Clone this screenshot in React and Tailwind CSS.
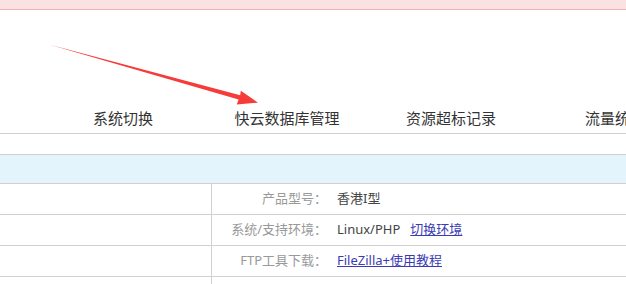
import React from 'react';

const font = { fontFamily: '"Noto Sans", "Noto Sans CJK SC", sans-serif' };

const tabs = ['系统切换', '快云数据库管理', '资源超标记录', '流量统计'];

function InfoRow({ label, children }) {
    return (
        <div className="flex h-[31px] border-b border-[#d0d0d0]">
            <div className="w-[212px] border-r border-[#d0d0d0]"></div>
            <div className="w-[115px] flex items-center justify-end text-[13px] text-[#999] whitespace-nowrap">{label}</div>
            <div className="flex-1 flex items-center pl-[10px] text-[13px] text-[#444] whitespace-nowrap">{children}</div>
        </div>
    );
}

export default function App() {
    return (
        <div className="relative w-[626px] h-[284px] overflow-hidden bg-white" style={font}>
            {/* top alert strip */}
            <div className="h-[10px] bg-[#fbe2e2] border-b border-[#f1b3b8]"></div>

            {/* tabs */}
            <div className="flex pl-[41px] pt-[98px] h-[124px] border-b border-[#cfcfcf] whitespace-nowrap">
                {tabs.map((t) => (
                    <div key={t} className="w-[164px] shrink-0 text-center text-[15px] leading-[20px] text-[#333]">{t}</div>
                ))}
            </div>

            <div className="h-[20px]"></div>
            <div className="h-[30px] bg-[#e3f4fc] border-y border-[#d0d0d0]"></div>

            <InfoRow label="产品型号：">香港I型</InfoRow>
            <InfoRow label="系统/支持环境：">
                <span>Linux/PHP</span>
                <a href="#" className="ml-[10px] text-[#3b3bb5] underline">切换环境</a>
            </InfoRow>
            <InfoRow label="FTP工具下载：">
                <a href="#" className="text-[#3b3bb5] underline">FileZilla+使用教程</a>
            </InfoRow>
            <div className="flex h-[12px]">
                <div className="w-[212px] border-r border-[#d0d0d0]"></div>
            </div>

            {/* red arrow annotation */}
            <svg className="absolute left-0 top-0 pointer-events-none" width="626" height="284" viewBox="0 0 626 284">
                <polygon
                    points="49,44.5 240.2,95.2 240.8,90.7 258,102.7 236.8,104.4 238.6,99.6"
                    fill="#f73a3a"
                />
            </svg>
        </div>
    );
}
